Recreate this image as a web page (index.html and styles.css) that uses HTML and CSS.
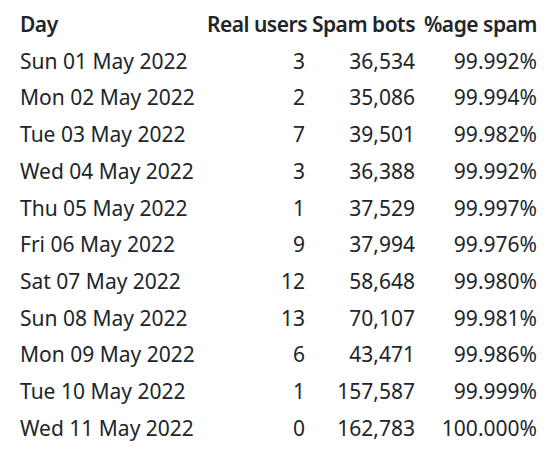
FILE: index.html
```html
<!DOCTYPE html>
<html>
<head>
<meta charset="utf-8">
<link rel="stylesheet" href="styles.css">
</head>
<body>
<table class="stats">
  <colgroup>
    <col class="c-day"><col class="c-real"><col class="c-spam"><col class="c-pct">
  </colgroup>
  <thead>
    <tr><th class="left">Day</th><th>Real users</th><th>Spam bots</th><th>%age spam</th></tr>
  </thead>
  <tbody>
    <tr><td class="left">Sun 01 May 2022</td><td>3</td><td>36,534</td><td>99.992%</td></tr>
    <tr><td class="left">Mon 02 May 2022</td><td>2</td><td>35,086</td><td>99.994%</td></tr>
    <tr><td class="left">Tue 03 May 2022</td><td>7</td><td>39,501</td><td>99.982%</td></tr>
    <tr><td class="left">Wed 04 May 2022</td><td>3</td><td>36,388</td><td>99.992%</td></tr>
    <tr><td class="left">Thu 05 May 2022</td><td>1</td><td>37,529</td><td>99.997%</td></tr>
    <tr><td class="left">Fri 06 May 2022</td><td>9</td><td>37,994</td><td>99.976%</td></tr>
    <tr><td class="left">Sat 07 May 2022</td><td>12</td><td>58,648</td><td>99.980%</td></tr>
    <tr><td class="left">Sun 08 May 2022</td><td>13</td><td>70,107</td><td>99.981%</td></tr>
    <tr><td class="left">Mon 09 May 2022</td><td>6</td><td>43,471</td><td>99.986%</td></tr>
    <tr><td class="left">Tue 10 May 2022</td><td>1</td><td>157,587</td><td>99.999%</td></tr>
    <tr><td class="left">Wed 11 May 2022</td><td>0</td><td>162,783</td><td>100.000%</td></tr>
  </tbody>
</table>
</body>
</html>
```
FILE: styles.css
```css
html, body {
  margin: 0;
  padding: 0;
  background: #ffffff;
}
body {
  padding: 6px 0 0 18px;
  font-family: "Noto Sans", "Open Sans", sans-serif;
  font-size: 21px;
  color: #212529;
}
.stats {
  border-collapse: collapse;
  table-layout: fixed;
  width: 521px;
}
.c-day { width: 187px; }
.c-real { width: 102px; }
.c-spam { width: 110px; }
.c-pct { width: 122px; }
.stats th, .stats td {
  padding: 0 2px;
  line-height: 36.7px;
  height: 36.7px;
  text-align: right;
  white-space: nowrap;
  vertical-align: middle;
}
.stats th {
  font-weight: 600;
  letter-spacing: -0.5px;
}
.stats .left {
  text-align: left;
}
```
